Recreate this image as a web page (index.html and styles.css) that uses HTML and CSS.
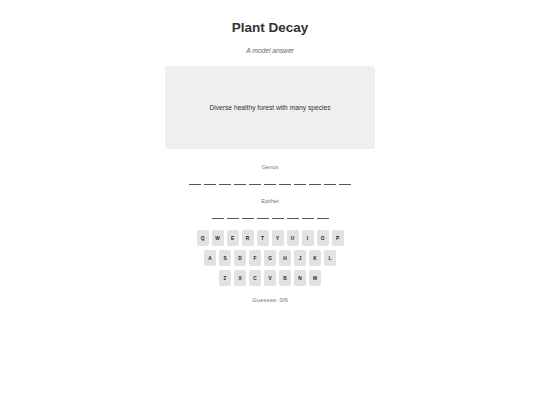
FILE: index.html
```html
<!DOCTYPE html>
<html>
<head>
<meta charset="utf-8">
<link rel="stylesheet" href="styles.css">
</head>
<body>
<div class="app">
  <h1 class="title">Plant Decay</h1>
  <p class="subtitle">A model answer</p>
  <div class="card">Diverse healthy forest with many species</div>
  <div class="label label-genus">Genus</div>
  <div class="blanks">
    <span></span><span></span><span></span><span></span><span></span><span></span><span></span><span></span><span></span><span></span><span></span>
  </div>
  <div class="label">Epithet</div>
  <div class="blanks">
    <span></span><span></span><span></span><span></span><span></span><span></span><span></span><span></span>
  </div>
  <div class="keyboard">
    <div class="row"><button class="key">Q</button><button class="key">W</button><button class="key">E</button><button class="key">R</button><button class="key">T</button><button class="key">Y</button><button class="key">U</button><button class="key">I</button><button class="key">O</button><button class="key">P</button></div>
    <div class="row"><button class="key">A</button><button class="key">S</button><button class="key">D</button><button class="key">F</button><button class="key">G</button><button class="key">H</button><button class="key">J</button><button class="key">K</button><button class="key">L</button></div>
    <div class="row"><button class="key">Z</button><button class="key">X</button><button class="key">C</button><button class="key">V</button><button class="key">B</button><button class="key">N</button><button class="key">M</button></div>
  </div>
  <div class="guesses">Guesses: 0/6</div>
</div>
</body>
</html>
```
FILE: styles.css
```css
html, body {
  margin: 0;
  padding: 0;
  background: #fff;
}
body {
  font-family: "Liberation Sans", Arial, sans-serif;
  color: #333;
}
.app {
  width: 210px;
  margin: 0 auto;
  padding-top: 20px;
  display: flex;
  flex-direction: column;
  align-items: center;
}
.title {
  margin: 0;
  font-size: 13.5px;
  line-height: 16px;
  font-weight: bold;
  color: #333;
}
.subtitle {
  margin: 11px 0 0;
  font-size: 6.7px;
  line-height: 8px;
  font-style: italic;
  color: #666;
}
.card {
  margin-top: 11px;
  width: 210px;
  height: 83px;
  box-sizing: border-box;
  background: #efefef;
  border-radius: 3px;
  display: flex;
  align-items: center;
  justify-content: center;
  font-size: 6.7px;
  color: #333;
}
.label {
  margin-top: 12px;
  font-size: 5.6px;
  line-height: 8px;
  color: #777;
}
.label-genus {
  margin-top: 14px;
}
.blanks {
  margin-top: 13px;
  display: flex;
  gap: 3px;
}
.blanks span {
  width: 12px;
  height: 1px;
  background: #555;
}
.keyboard {
  margin-top: 11px;
  display: flex;
  flex-direction: column;
  align-items: center;
  gap: 4px;
}
.row {
  display: flex;
  gap: 3px;
}
.key {
  width: 12px;
  height: 16px;
  padding: 0;
  border: none;
  border-radius: 2px;
  background: #e2e2e2;
  font-family: "Liberation Sans", Arial, sans-serif;
  font-size: 4.8px;
  font-weight: bold;
  color: #222;
  display: flex;
  align-items: center;
  justify-content: center;
}
.guesses {
  margin-top: 10px;
  font-size: 6.1px;
  line-height: 8px;
  color: #777;
}
```
